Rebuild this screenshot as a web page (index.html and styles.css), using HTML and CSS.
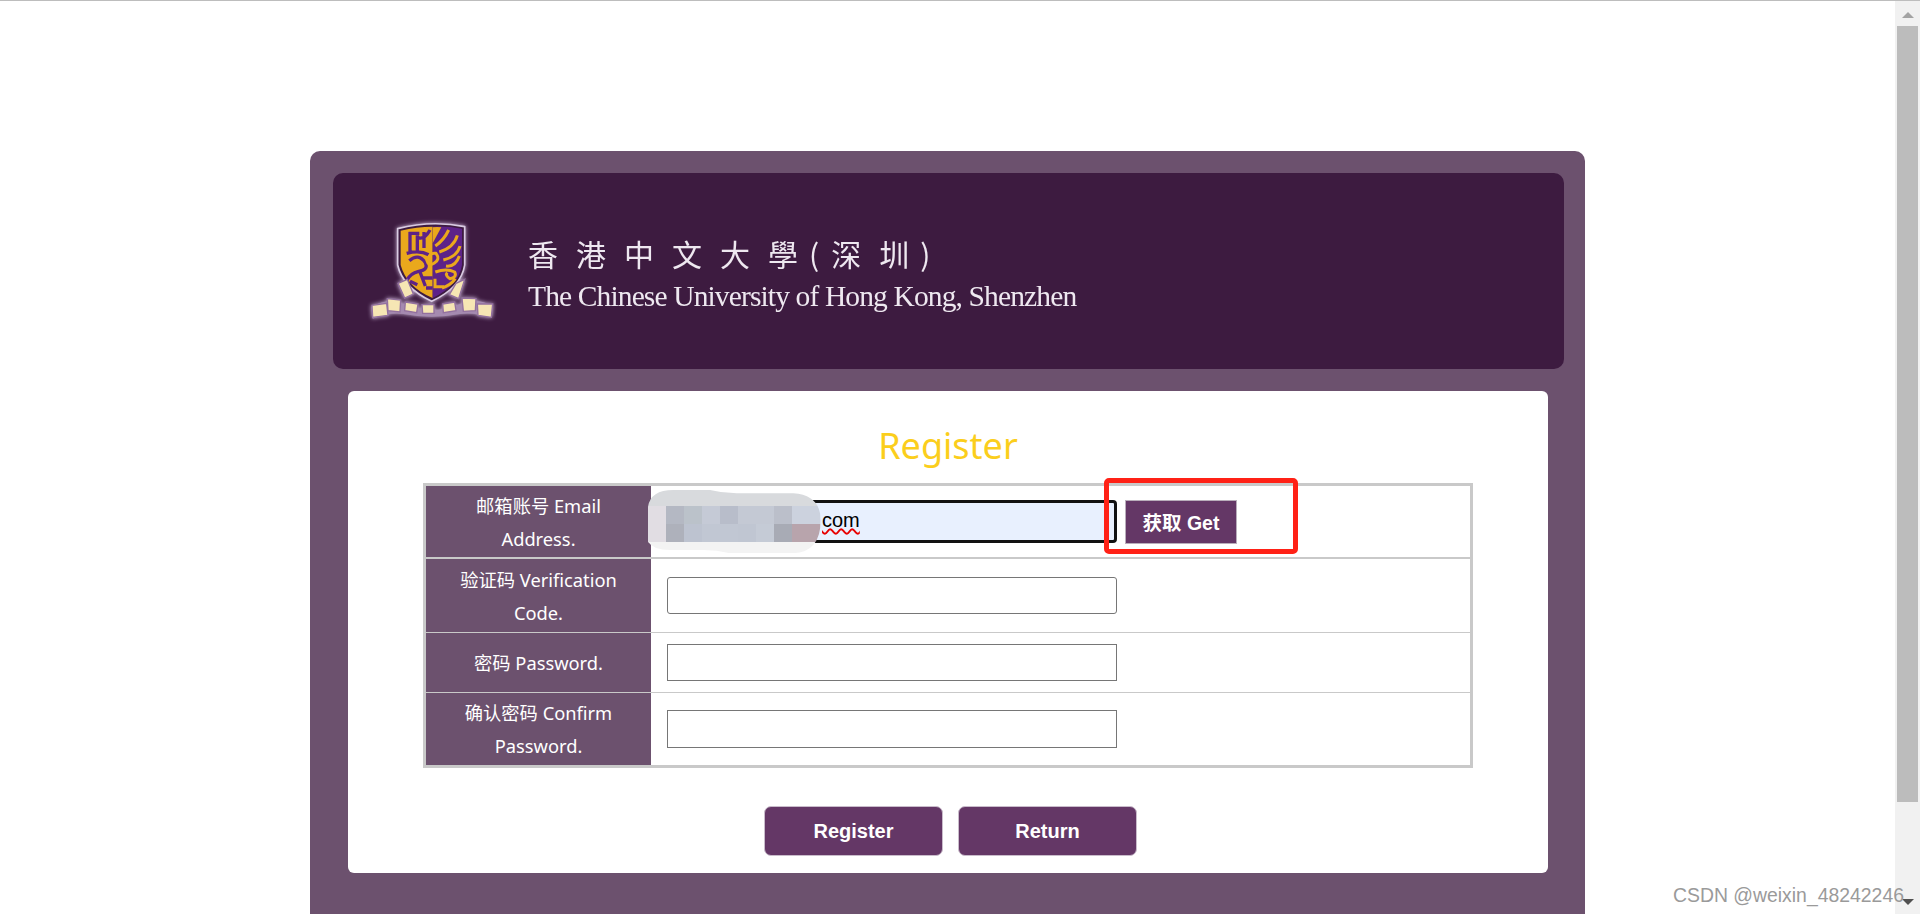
FILE: index.html
```html
<!DOCTYPE html>
<html lang="zh-CN">
<head>
<meta charset="utf-8">
<title>Register</title>
<link rel="stylesheet" href="styles.css">
</head>
<body>
<div class="window">
  <main class="page">
    <div class="panel">
      <header class="banner">
        <svg class="crest" viewBox="0 0 450 360" aria-hidden="true">
          <path class="shield-edge" d="M113 56Q215 30 314 50L314 165Q304 232 215 274Q128 232 113 165Z"/>
          <path class="gold" d="M122 62Q170 50 218 50L218 264Q140 232 122 165Z"/>
          <path class="violet" d="M218 50Q265 48 306 56L306 165Q296 226 218 264Z"/>
          <path class="gold" d="M218 52Q232 50 244 52L218 100Z"/>
          <g class="on-gold">
            <path d="M150 66V130M172 76V130M192 66V114M146 70H178M172 82Q192 92 210 60M140 130Q180 120 206 134"/>
            <path d="M148 152Q175 128 196 158Q206 180 176 184Q150 190 140 212M180 186L196 228M150 214L172 224"/>
            <path d="M198 234H218M186 204H218"/>
          </g>
          <g class="on-violet">
            <path d="M226 108Q252 90 266 60M238 126Q282 112 292 76M250 150Q292 140 300 108M258 168Q286 172 298 138"/>
            <path d="M204 150Q208 126 228 130Q242 148 222 160Q205 170 200 150"/>
            <path d="M226 186Q260 174 284 186Q292 202 270 206Q254 196 262 188M225 206V230H252M246 234Q272 226 286 206"/>
          </g>
          <path class="ribbon-back" d="M34 290Q90 262 130 282Q215 318 300 282Q350 262 398 288L394 322Q340 306 300 312Q215 328 130 312Q90 306 38 326Z"/>
          <g class="ribbon">
            <path d="M114 220L142 208L160 252L134 264Z"/>
            <path d="M314 208L288 220L268 254L296 266Z"/>
            <path d="M36 286L80 280L84 316L38 322Z"/>
            <path d="M82 266L122 270L120 306L84 302Z"/>
            <path d="M136 276L174 282L170 308L134 302Z"/>
            <path d="M186 284L222 284L222 310L188 310Z"/>
            <path d="M248 282L284 276L288 302L250 308Z"/>
            <path d="M306 264L348 266L346 302L310 304Z"/>
            <path d="M352 282L398 282L394 322L354 316Z"/>
          </g>
        </svg>
        <div class="wordmark">
          <div class="name-zh">香港中文大<span class="tight">學</span><span class="paren">(</span>深<span class="tight">圳</span>)</div>
          <div class="name-en">The Chinese University of Hong Kong, Shenzhen</div>
        </div>
      </header>
      <section class="card">
        <h1 class="title">Register</h1>
        <table class="form">
          <tr class="row-first">
            <th class="label">邮箱账号 Email Address.</th>
            <td class="field anchor">
              <div class="line">
                <div class="box box-filled"><span class="typed">com</span></div>
                <button class="get" type="button">获取 Get</button>
              </div>
              <svg class="mosaic" viewBox="714 60 522 192" aria-hidden="true">
                <defs><clipPath id="blot"><path d="M714 110Q722 60 790 60H900Q940 70 980 70H1150Q1232 76 1232 150Q1232 246 1150 250H960Q920 240 880 240H780Q730 240 714 215Z"/></clipPath></defs>
                <g clip-path="url(#blot)">
                  <rect x="714" y="60" width="522" height="48" fill="#d8dadd"/>
                  <rect x="714" y="108" width="54" height="110" fill="#e1dde3"/>
                  <rect x="714" y="216" width="522" height="36" fill="#f3f3f3"/>
                  <rect x="768" y="108" width="54" height="54" fill="#b4b8c3"/><rect x="822" y="108" width="54" height="54" fill="#bbc2ca"/><rect x="876" y="108" width="54" height="54" fill="#c5cad6"/><rect x="930" y="108" width="54" height="54" fill="#b8bdca"/><rect x="984" y="108" width="54" height="54" fill="#c4c9d4"/><rect x="1038" y="108" width="54" height="54" fill="#c4c9d4"/><rect x="1092" y="108" width="54" height="54" fill="#bbbfca"/><rect x="1146" y="108" width="90" height="54" fill="#ccd2de"/>
                  <rect x="768" y="162" width="54" height="54" fill="#aeb1bb"/><rect x="822" y="162" width="54" height="54" fill="#bdc3d0"/><rect x="876" y="162" width="54" height="54" fill="#c1c7d3"/><rect x="930" y="162" width="54" height="54" fill="#c1c7d3"/><rect x="984" y="162" width="54" height="54" fill="#c0c6d2"/><rect x="1038" y="162" width="54" height="54" fill="#c5cbd6"/><rect x="1092" y="162" width="54" height="54" fill="#a8abb5"/><rect x="1146" y="162" width="90" height="54" fill="#b8a4ac"/>
                </g>
              </svg>
              <div class="callout"></div>
            </td>
          </tr>
          <tr class="row-second">
            <th class="label">验证码 Verification Code.</th>
            <td class="field"><input class="box" type="text"></td>
          </tr>
          <tr class="row-short">
            <th class="label">密码 Password.</th>
            <td class="field"><input class="box box-square" type="password"></td>
          </tr>
          <tr class="row-last">
            <th class="label">确认密码 Confirm Password.</th>
            <td class="field"><input class="box box-square" type="password"></td>
          </tr>
        </table>
        <div class="actions">
          <button class="action" type="button">Register</button>
          <button class="action" type="button">Return</button>
        </div>
      </section>
    </div>
  </main>
  <aside class="scrollbar" aria-hidden="true">
    <span class="arrow-up"></span>
    <span class="thumb"></span>
    <span class="arrow-down"></span>
  </aside>
</div>
<div class="watermark">CSDN @weixin_48242246</div>
</body>
</html>
```
FILE: styles.css
```css
html, body { margin: 0; height: 100%; overflow: hidden; background: #fff; }
body { font-family: "Noto Sans", "Noto Sans CJK SC", sans-serif; }
.window { display: flex; height: 914px; border-top: 1px solid #bdbdbd; box-sizing: border-box; }
.page { flex: 1; min-width: 0; overflow: hidden; padding: 150px 0 0 310px; }
.panel { width: 1275px; height: 900px; box-sizing: border-box; padding: 22px 0 0 23px; background: #6c516e; border-radius: 10px; }
.banner { width: 1231px; height: 196px; box-sizing: border-box; padding: 37px 0 0 27px; display: flex; gap: 18px; background: #3d1b40; border-radius: 10px; }
.crest { width: 150px; height: 120px; flex: none; filter: blur(0.7px) drop-shadow(0 0 2px #cdb9d8); }
.shield-edge { fill: #3d1b40; stroke: #d9cbe2; stroke-width: 5; }
.gold { fill: #eaa81c; }
.violet { fill: #5d2288; }
.on-gold path { fill: none; stroke: #5d2288; stroke-width: 10; }
.on-violet path { fill: none; stroke: #eaa81c; stroke-width: 9; }
.ribbon-back { fill: #a58ab0; }
.ribbon path { fill: #f6e6b4; stroke: #93709f; stroke-width: 4; }
.wordmark { padding-top: 25px; color: #eee8f0; filter: blur(0.45px); }
.name-zh { font-family: "Noto Sans CJK TC", sans-serif; font-weight: 400; font-size: 30px; line-height: 36px; letter-spacing: 18px; white-space: nowrap; }
.tight { letter-spacing: 11px; }
.paren { letter-spacing: 12px; }
.name-en { font-family: "Liberation Serif", serif; font-size: 29.5px; line-height: 34px; letter-spacing: -0.87px; margin-top: 8px; white-space: nowrap; }
.card { width: 1200px; height: 482px; box-sizing: border-box; margin: 22px 0 0 15px; padding-top: 30px; background: #fff; border-radius: 6px; }
.title { margin: 0; text-align: center; font-size: 36px; line-height: 50px; font-weight: 400; color: #fbce1c; }
.form { width: 1050px; margin: 12px 0 0 75px; table-layout: fixed; border: 3px solid #c9c9c9; border-spacing: 0; }
.label { width: 225px; padding: 0 14px; box-sizing: border-box; background: #6c516e; color: #fff; font-size: 18.3px; line-height: 33px; font-weight: 400; border-bottom: 1px solid #c9c9c9; }
.field { padding: 0 0 0 16px; box-sizing: border-box; border-bottom: 1px solid #c9c9c9; }
.row-first .label, .row-first .field { height: 73px; border-bottom-width: 2px; }
.row-second .label, .row-second .field { height: 74px; }
.row-short .label, .row-short .field { height: 60px; }
.row-last .label, .row-last .field { height: 72px; border-bottom: 0; }
.anchor { position: relative; }
.line { display: flex; align-items: center; gap: 8px; }
.box { display: block; width: 450px; height: 37px; box-sizing: border-box; margin: 0; padding: 0; background: #fff; border: 1px solid #767676; border-radius: 3px; outline: 0; }
.box-square { border-radius: 0; }
.row-last .box { height: 38px; }
.box-filled { height: 43px; background: #e8f0fe; border: 3px solid #111; border-radius: 4px; padding-left: 152px; font: 20px/35px "Liberation Sans", sans-serif; color: #000; }
.typed { text-decoration: underline wavy #e80000 1.5px; text-underline-offset: 1px; }
.get { width: 112px; height: 44px; padding: 0; background: #643766; color: #fff; border: 1px solid #b9aebb; font: 700 19.5px "Liberation Sans", "Noto Sans CJK SC", sans-serif; }
.mosaic { position: absolute; left: -3px; top: 4px; width: 174px; height: 64px; }
.callout { position: absolute; left: 453px; top: -8px; width: 194px; height: 76px; box-sizing: border-box; border: 5px solid #ff2116; border-radius: 5px; }
.actions { display: flex; justify-content: center; gap: 15px; margin-top: 38px; padding-left: 5px; }
.action { width: 179px; height: 50px; padding: 0; background: #643766; color: #fff; border: 1px solid #c9bccb; border-radius: 7px; font: 700 20px "Liberation Sans", sans-serif; }
.scrollbar { width: 25px; flex: none; display: flex; flex-direction: column; align-items: center; background: #f1f1f1; }
.arrow-up { width: 0; height: 0; flex: none; margin-top: 11px; border: 6px solid transparent; border-top: 0; border-bottom: 6px solid #a3a3a3; }
.thumb { width: 21px; height: 776px; flex: none; margin-top: 8px; background: #bcbcbc; }
.arrow-down { width: 0; height: 0; flex: none; margin-top: 97px; border: 6px solid transparent; border-bottom: 0; border-top: 6px solid #505050; }
.watermark { position: absolute; left: 1673px; top: 883px; font: 19.4px/24px "Liberation Sans", sans-serif; color: #9a9a9a; white-space: nowrap; }
```
